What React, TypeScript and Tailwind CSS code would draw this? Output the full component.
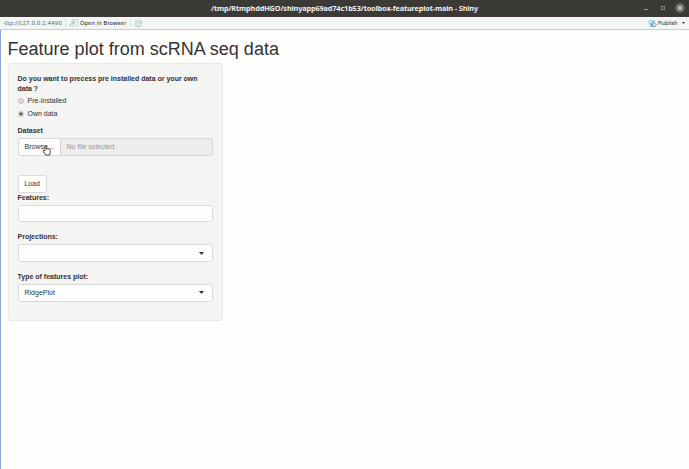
import type { ReactNode } from "react";

function Label({ children }: { children: ReactNode }) {
  return <div className="h-[10px] text-[7px] leading-[10px] font-bold whitespace-nowrap">{children}</div>;
}

function Radio({ checked, label }: { checked?: boolean; label: string }) {
  return (
    <label className="flex h-[10px] items-center gap-[4px] leading-[10px]">
      <svg width="6" height="6" viewBox="0 0 6 6">
        <circle cx="3" cy="3" r="2.6" fill="#dedede" stroke="#b4b4b4" strokeWidth=".7" />
        {checked && <circle cx="3" cy="3" r="1.4" fill="#4c4c4c" />}
      </svg>
      {label}
    </label>
  );
}

function Select({ value }: { value?: string }) {
  return (
    <div className="flex h-[18px] w-[195px] items-center justify-between rounded-[2.5px] border border-[#dadada] bg-[#fefefd] pr-[8px] pl-[6px]">
      <span className="pt-[1.5px]">{value}</span>
      <svg width="5" height="3" viewBox="0 0 5 3">
        <path d="M0 0h5L2.5 3z" fill="#333" />
      </svg>
    </div>
  );
}

export default function App() {
  return (
    <div className="flex h-[469px] w-[689px] flex-col overflow-hidden bg-[#fefefd] font-['Liberation_Sans',Arial,sans-serif] text-[7px] text-[#333]">
      <header className="relative flex h-[17px] shrink-0 items-center justify-center bg-[#3b3a37] text-[#f0efed]">
        <h1 className="w-[267px] font-['Noto_Sans',sans-serif] text-[7.3px] leading-[17px] font-bold tracking-[-0.12px] whitespace-nowrap">
          /tmp/RtmphddHGO/shinyapp69ad74c1b53/toolbox-featureplot-main - Shiny
        </h1>
        <div className="absolute top-[3px] right-[4px] flex items-center">
          <svg width="41" height="10" viewBox="0 0 41 10" fill="none">
            <path d="M0 6.5h4" stroke="#999894" />
            <path d="M17.5 3.5h3v3h-3z" stroke="#999894" strokeWidth=".8" />
            <circle cx="36" cy="5" r="4.7" fill="#74736f" />
            <path d="m34.2 3.2 3.6 3.6m0-3.6-3.6 3.6" stroke="#f5f5f3" />
          </svg>
        </div>
      </header>
      <nav className="flex h-[13px] shrink-0 items-center border-b border-[#c3cfdb] bg-[#f1f5f4] font-['DejaVu_Sans',sans-serif] text-[5.6px] leading-[12px] whitespace-nowrap text-[#222]">
        <span className="w-[65px] pl-[3px] tracking-[0.03px] text-[#686868]">-ttp://127.0.0.1:4490</span>
        <span className="h-[8px] w-px bg-[#dce1e1]" />
        <svg className="ml-[3px]" width="10" height="10" viewBox="0 0 10 10" fill="none">
          <path d="M3 1.5h6v6.5H3z" fill="#e8eef1" stroke="#c1ced6" strokeWidth=".7" />
          <path d="M1 8.5c.2-3 1.7-4 4.2-4M3.5 3l2 1.4L4 6" stroke="#a6bbc8" />
        </svg>
        <span className="ml-[1px] w-[50px]">Open in Browser</span>
        <span className="h-[8px] w-px bg-[#dce1e1]" />
        <svg className="ml-[3px]" width="9" height="9" viewBox="0 0 9 9" fill="none">
          <circle cx="4.5" cy="4.5" r="3.6" fill="#eef2f5" stroke="#bdcbd5" strokeWidth=".8" />
          <path d="M6 3a2.2 2.2 0 1 0 .4 2.7M4.5 4H7V1.8" stroke="#b2c3cf" strokeWidth=".8" />
        </svg>
        <div className="ml-auto flex items-center pr-[4px]">
          <svg className="mr-px" width="9" height="9" viewBox="0 0 9 9" fill="none">
            <path d="M.8 3.8C1 1.2 4 .5 5.4 2.6M3.6 3.2l2.4.1.2-2.2" stroke="#63b3d5" />
            <path d="M8.3 5.2c-.2 2.6-3.3 3.3-4.6 1.2M5.4 5.8 3 5.7l-.2 2.2" stroke="#2689bd" />
            <path d="M1 5.2c1-.9 2.1-1 3.4-.7s2.4.2 3.5-.7" stroke="#56a9cf" strokeWidth=".9" />
          </svg>
          <span className="w-[24px] tracking-[-0.06px]">Publish</span>
          <svg width="3" height="2" viewBox="0 0 3 2">
            <path d="M0 0h3L1.5 2z" fill="#333" />
          </svg>
        </div>
      </nav>
      <main className="flex-1 border-l border-[#8da6d2] pl-[6.5px]">
        <h2 className="pt-[8px] text-[18px] leading-[22px] tracking-[0.01px] whitespace-nowrap">Feature plot from scRNA seq data</h2>
        <section className="mt-[3px] h-[258px] w-[215px] rounded-[3px] border border-[#e8e8e7] bg-[#f4f4f3] pt-[9.5px] pl-[9px]">
          <Label>Do you want to precess pre installed data or your own</Label>
          <Label>data ?</Label>
          <div className="mt-[2.5px] mb-[7px] flex flex-col gap-[2.5px]">
            <Radio label="Pre-installed" />
            <Radio label="Own data" checked />
          </div>
          <Label>Dataset</Label>
          <div className="relative mt-[2px] flex h-[18px] w-[195px] items-center rounded-[2.5px] border border-[#d7d7d7] bg-[#ededec]">
            <span className="flex h-full w-[42px] items-center rounded-l-[2px] border-r border-[#d4d4d4] bg-[#fefefd] pt-[1.5px] pl-[6px]">
              Browse...
            </span>
            <span className="pt-[1.5px] pl-[6px] text-[#999]">No file selected</span>
            <svg className="absolute top-[6px] left-[23px]" width="10" height="11" viewBox="0 0 10 11">
              <path d="M3 6V1.2c0-1 1.4-1 1.4 0V4c.5-.6 1.2-.3 1.3.2.5-.5 1.2-.2 1.3.3.6-.4 1.3 0 1.3.7v2.3L7.5 10H3.7L1.2 6.3c-.5-.8.5-1.4 1-.9z" fill="#fff" stroke="#222" strokeWidth=".8" />
            </svg>
          </div>
          <button className="mt-[19px] flex h-[18px] w-[29px] items-center justify-center rounded-[2.5px] border border-[#dadada] bg-[#fefefd] pt-[1.5px]">
            Load
          </button>
          <Label>Features:</Label>
          <div className="mt-[2px] h-[17.5px] w-[195px] rounded-[2.5px] border border-[#dadada] bg-[#fefefd]" />
          <div className="mt-[10px] mb-[2px]">
            <Label>Projections:</Label>
          </div>
          <Select />
          <div className="mt-[9.5px] mb-[2px]">
            <Label>Type of features plot:</Label>
          </div>
          <Select value="RidgePlot" />
        </section>
      </main>
    </div>
  );
}
